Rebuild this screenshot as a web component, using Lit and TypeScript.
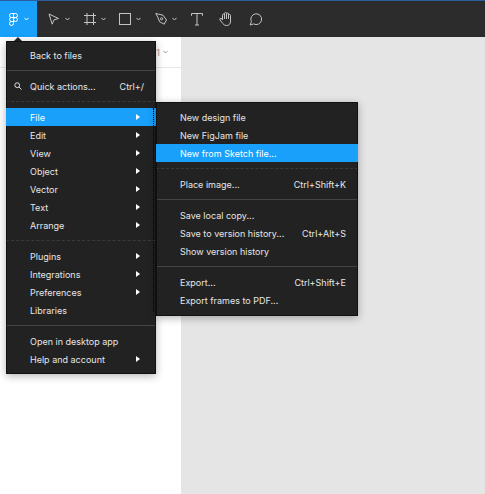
import { LitElement, css, html, svg } from "lit";
import { customElement } from "lit/decorators.js";

type Item = { label?: string; keys?: string; arrow?: boolean; active?: boolean; search?: boolean; sep?: "solid" | "dashed" };

const mainItems: Item[] = [
  { label: "Back to files" },
  { sep: "solid" },
  { label: "Quick actions...", keys: "Ctrl+/", search: true },
  { sep: "dashed" },
  { label: "File", arrow: true, active: true },
  { label: "Edit", arrow: true },
  { label: "View", arrow: true },
  { label: "Object", arrow: true },
  { label: "Vector", arrow: true },
  { label: "Text", arrow: true },
  { label: "Arrange", arrow: true },
  { sep: "dashed" },
  { label: "Plugins", arrow: true },
  { label: "Integrations", arrow: true },
  { label: "Preferences", arrow: true },
  { label: "Libraries" },
  { sep: "solid" },
  { label: "Open in desktop app" },
  { label: "Help and account", arrow: true },
];

const fileItems: Item[] = [
  { label: "New design file" },
  { label: "New FigJam file" },
  { label: "New from Sketch file...", active: true },
  { sep: "dashed" },
  { label: "Place image...", keys: "Ctrl+Shift+K" },
  { sep: "solid" },
  { label: "Save local copy..." },
  { label: "Save to version history...", keys: "Ctrl+Alt+S" },
  { label: "Show version history" },
  { sep: "solid" },
  { label: "Export...", keys: "Ctrl+Shift+E" },
  { label: "Export frames to PDF..." },
];

const chevron = html`<svg class="chevron" width="5" height="4" viewBox="0 0 5 4"><path d="M.4 .8 2.5 3 4.6 .8" fill="none" stroke="currentColor"/></svg>`;

const tools = [
  { width: 12, chevron: true, icon: svg`<path d="M1 2 10.5 6.5 6 7.8 4.2 12.2Z"/>` },
  { width: 12, chevron: true, icon: svg`<path d="M3 1V13M9.5 1V13M0 3.5H12M0 10.5H12"/>` },
  { width: 12, chevron: true, icon: svg`<rect x=".5" y="1.5" width="11" height="11"/>` },
  { width: 12, chevron: true, icon: svg`<path d="M.8 1.5 8 3.2 11.5 8 9.2 12.2 4.6 9.8 2.8 5.2Z"/><circle cx="6.6" cy="6.8" r="1.1"/>` },
  { width: 12, chevron: false, icon: svg`<path d="M.5 3.8V1.5H11.5V3.8M6 1.5V13M4 13H8"/>` },
  { width: 14, chevron: false, icon: svg`<path d="M3.5 8V3.2Q3.5 2 4.5 2T5.5 3.2V1.6Q5.5 .5 6.5 .5T7.5 1.6V2Q7.5 1 8.5 1T9.5 2V3.2Q9.5 2.4 10.5 2.4T11.5 3.4V9Q11.5 13.5 7.5 13.5 5 13.5 3.8 11.5L1 8Q.3 7 1.1 6.4T3 7ZM5.5 3V7M7.5 2V7M9.5 3V7"/>` },
  { width: 14, chevron: false, icon: svg`<path d="M1.2 13 2.4 9.6A5.4 5.4 0 1 1 4.6 11.9Z"/>` },
];

@customElement("app-root")
export class AppRoot extends LitElement {
  static styles = css`
    :host {
      display: block;
      position: relative;
      width: 485px;
      height: 494px;
      overflow: hidden;
      background: #fff;
      font-family: Inter, "Liberation Sans", sans-serif;
      font-size: 9px;
    }

    .toolbar {
      display: flex;
      height: 36px;
      border-top: 1px solid #2a5c9e;
      background: #2c2c2c;
      color: #c4c4c4;
    }

    .logo-btn {
      display: flex;
      align-items: center;
      gap: 6px;
      width: 37px;
      box-sizing: border-box;
      padding: 0 0 0 9px;
      background: #18a0fb;
      color: #fff;
    }

    .tools {
      display: flex;
      align-items: center;
      padding-left: 11px;
    }

    .tool {
      display: flex;
      align-items: center;
      gap: 5px;
      width: 36px;
    }

    .tool svg.icon {
      fill: none;
      stroke: currentColor;
      stroke-width: 1;
      flex: none;
    }

    .tool-1 { width: 35px; }
    .tool-4 { width: 28px; }
    .tool-5 { width: 30px; }

    .body {
      display: flex;
      height: 457px;
    }

    .panel {
      width: 181px;
      height: 31px;
      box-sizing: border-box;
      border-bottom: 1px solid #e8e8e8;
      display: flex;
      justify-content: flex-end;
      align-items: center;
      gap: 3px;
      padding: 0 13px 0 0;
      color: #999;
      font-size: 9px;
    }

    .canvas {
      flex: 1;
      background: #e5e5e5;
    }

    .menu {
      position: absolute;
      box-sizing: border-box;
      padding: 5px 0 6px;
      background: #222;
      outline: 1px solid #111;
      outline-offset: -1px;
      box-shadow: 0 2px 8px rgba(0, 0, 0, 0.3);
      color: #e6e6e6;
    }

    .main {
      left: 6px;
      top: 41px;
      width: 150px;
    }

    .main::before {
      content: "";
      position: absolute;
      top: -4px;
      left: 8px;
      border-left: 4px solid transparent;
      border-right: 4px solid transparent;
      border-bottom: 4px solid #222;
    }

    .sub {
      left: 156px;
      top: 102px;
      width: 202px;
      padding: 6px 0 7px;
    }

    /* dotted shadow edge the submenu casts on the main menu */
    .sub::before {
      content: "";
      position: absolute;
      left: -3px;
      top: 6px;
      bottom: 4px;
      border-left: 1px dotted #000;
    }

    .row {
      position: relative;
      display: flex;
      align-items: center;
      justify-content: space-between;
      height: 18px;
      padding: 0 12px 0 24px;
      white-space: nowrap;
    }

    .row.active {
      background: #18a0fb;
      color: #fff;
    }

    .search {
      position: absolute;
      left: 8px;
      top: 5px;
      fill: none;
      stroke: #ddd;
    }

    .arrow {
      width: 0;
      height: 0;
      margin-right: 4px;
      border-left: 4px solid #fff;
      border-top: 3px solid transparent;
      border-bottom: 3px solid transparent;
    }

    .sep {
      margin: 6px 0;
      border-top: 1px solid #444;
    }

    .sep.dashed {
      border-top: 1px dashed #3a3a3a;
    }
  `;

  renderItem(item: Item) {
    if (item.sep) return html`<div class="sep ${item.sep}"></div>`;
    return html`<div class="row ${item.active ? "active" : ""}">
      ${item.search
        ? html`<svg class="search" width="8" height="8" viewBox="0 0 8 8"><circle cx="3.2" cy="3.2" r="2.4"/><path d="M5 5 7.6 7.6"/></svg>`
        : null}
      <span>${item.label}</span>
      ${item.keys ? html`<span>${item.keys}</span>` : null}
      ${item.arrow ? html`<i class="arrow"></i>` : null}
    </div>`;
  }

  render() {
    return html`
      <div class="toolbar">
        <div class="logo-btn">
          <svg width="9" height="13" viewBox="0 0 9 13" fill="none" stroke="currentColor">
            <path d="M4.5 .5H2.5A2 2 0 0 0 2.5 4.5H4.5ZM4.5 .5H6.5A2 2 0 0 1 6.5 4.5H4.5ZM4.5 4.5H2.5A2 2 0 0 0 2.5 8.5H4.5ZM4.5 8.5H2.5A2 2 0 1 0 4.5 10.5Z"/>
            <circle cx="6.5" cy="6.5" r="2"/>
          </svg>
          ${chevron}
        </div>
        <div class="tools">
          ${tools.map(
            (t, i) => html`<div class="tool tool-${i}">
              <svg class="icon" width=${t.width} height="14" viewBox="0 0 ${t.width} 14">${t.icon}</svg>
              ${t.chevron ? chevron : null}
            </div>`
          )}
        </div>
      </div>
      <div class="body">
        <div class="panel">
          <span>1</span>
          ${chevron}
        </div>
        <div class="canvas"></div>
      </div>
      <div class="menu main">${mainItems.map((i) => this.renderItem(i))}</div>
      <div class="menu sub">${fileItems.map((i) => this.renderItem(i))}</div>
    `;
  }
}
